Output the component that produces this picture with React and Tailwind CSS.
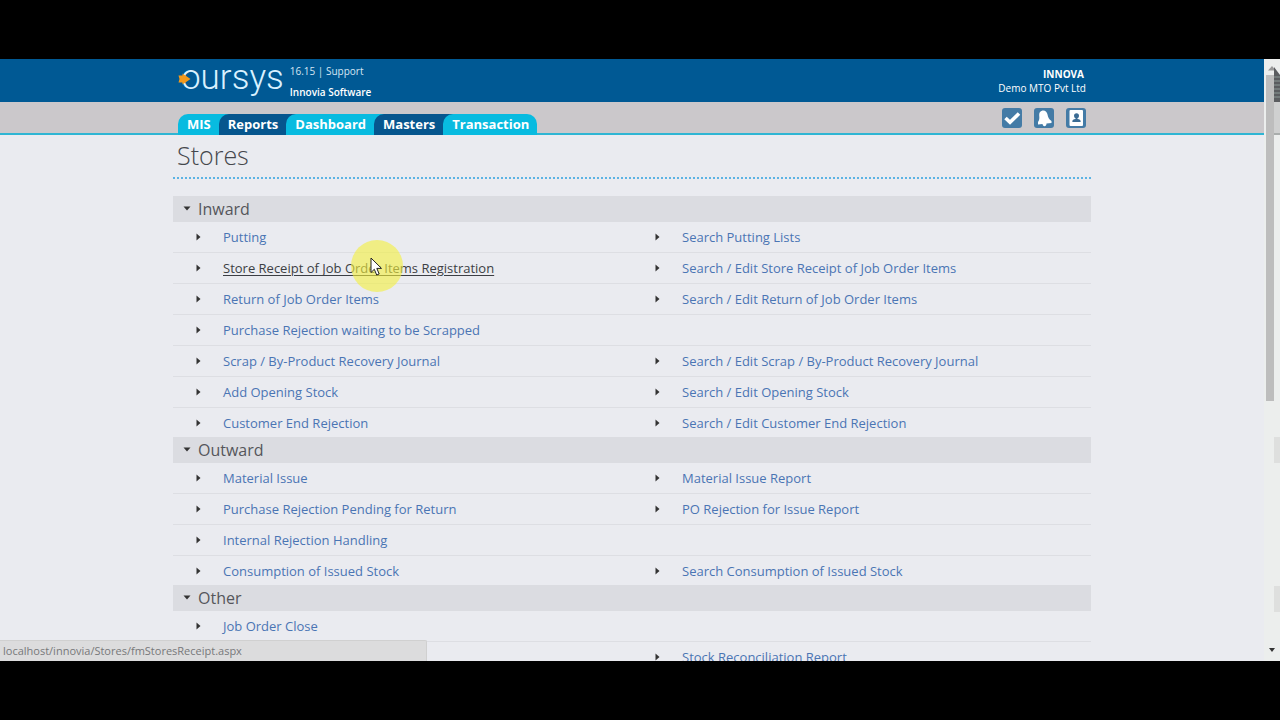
const tabs = [
  { label: "MIS", active: false },
  { label: "Reports", active: true },
  { label: "Dashboard", active: false },
  { label: "Masters", active: true },
  { label: "Transaction", active: false },
];

const sections = [
  {
    title: "Inward",
    rows: [
      ["Putting", "Search Putting Lists"],
      ["Store Receipt of Job Order Items Registration", "Search / Edit Store Receipt of Job Order Items"],
      ["Return of Job Order Items", "Search / Edit Return of Job Order Items"],
      ["Purchase Rejection waiting to be Scrapped", null],
      ["Scrap / By-Product Recovery Journal", "Search / Edit Scrap / By-Product Recovery Journal"],
      ["Add Opening Stock", "Search / Edit Opening Stock"],
      ["Customer End Rejection", "Search / Edit Customer End Rejection"],
    ],
  },
  {
    title: "Outward",
    rows: [
      ["Material Issue", "Material Issue Report"],
      ["Purchase Rejection Pending for Return", "PO Rejection for Issue Report"],
      ["Internal Rejection Handling", null],
      ["Consumption of Issued Stock", "Search Consumption of Issued Stock"],
    ],
  },
  {
    title: "Other",
    rows: [
      ["Job Order Close", null],
      [null, "Stock Reconciliation Report"],
    ],
  },
];

const HOVERED = "Store Receipt of Job Order Items Registration";

function Logo() {
  return (
    <a href="#" aria-label="oursys" className="relative mr-[6px] block pl-[3px] font-['Roboto',sans-serif] text-[35px] leading-[38px] font-light text-[#d9f1ff]">
      oursys
      <svg className="absolute top-[14px] left-0" width="13" height="12" viewBox="0 0 13 12" aria-hidden="true">
        <path d="M0.500 2.500H4.500V0.500L12.500 6 4.500 11.500V9.500H0.500L1.500 6z" fill="#f39a1b" />
      </svg>
    </a>
  );
}

function Pointer() {
  return (
    <div className="pointer-events-none absolute -top-[18px] left-[128px] size-[52px] rounded-full bg-[#f4f03c]/60">
      <svg className="absolute top-[17px] left-[19px]" width="13" height="20" viewBox="0 0 13 20" aria-hidden="true">
        <path d="M1 1v14.500l3.300-3.200 2.400 5.700 2.500-1-2.400-5.600h4.700z" fill="#fff" stroke="#222" strokeWidth="1" />
      </svg>
    </div>
  );
}

function Entry({ label }) {
  if (!label) return <div />;
  const hovered = label === HOVERED;
  return (
    <div className="flex items-center pl-[23px]">
      <svg className="mr-[22px] shrink-0" width="5" height="8" viewBox="0 0 5 8" aria-hidden="true">
        <path d="M0.500 0.500 4.500 4l-4 3.500z" fill="#333" />
      </svg>
      <span className="relative">
        <a href="#" className={hovered ? "text-[#3c3e44] underline underline-offset-2" : "text-[#4a75b4]"}>
          {label}
        </a>
        {hovered && <Pointer />}
      </span>
    </div>
  );
}

function Section({ title, rows }) {
  return (
    <section>
      <h2 className="flex h-[26px] items-center bg-[#dbdce1] pl-[10px] text-[16px] text-[#55565b]">
        <svg className="mr-[7px] mb-[2px]" width="8" height="5" viewBox="0 0 8 5" aria-hidden="true">
          <path d="M0.500 0.500h7L4 4.500z" fill="#333" />
        </svg>
        {title}
      </h2>
      <div className="divide-y divide-[#dddee3]">
        {rows.map((row, i) => (
          <div key={i} className="grid min-h-[31px] grid-cols-2 text-[13px] leading-[20px] last:min-h-[29px]">
            <Entry label={row[0]} />
            <Entry label={row[1]} />
          </div>
        ))}
      </div>
    </section>
  );
}

function IconButton({ label, children }) {
  return (
    <button type="button" aria-label={label} className="size-5 rounded-[3px] bg-[#447ba6]">
      <svg viewBox="0 0 20 20" aria-hidden="true">{children}</svg>
    </button>
  );
}

function ScrollRail() {
  return (
    <div className="relative flex w-4 shrink-0 flex-col bg-[#eceeed]" aria-hidden="true">
      <div className="flex h-4 justify-center pt-[7px]">
        <svg width="8" height="5" viewBox="0 0 8 5"><path d="M0 4.500 4 0l4 4.500z" fill="#999" /></svg>
      </div>
      <div className="ml-[2px] h-[326px] w-2 bg-[#bdbdbd]" />
      <div className="mt-auto flex h-[13px] justify-center">
        <svg width="8" height="5" viewBox="0 0 8 5"><path d="M1 0h6L4 4z" fill="#333" /></svg>
      </div>
      <div className="absolute inset-y-0 right-0 w-[6px] pt-2">
        <svg className="block" width="6" height="35" viewBox="0 0 6 35">
          <path d="M0 0l6 8v27H0z" fill="#5b5d60" />
          <path d="M0 10h6M0 14h6M0 18h6M0 22h6M0 26h6M0 30h6" stroke="#8d9a96" />
        </svg>
        <div className="h-[33px] border-b-2 border-[#a9adac] bg-[#cfd0d0]" />
        <div className="mt-[302px] h-[26px] bg-[#dedfde]" />
        <div className="mt-[123px] h-[26px] bg-[#dedfde]" />
      </div>
    </div>
  );
}

export default function App() {
  return (
    <div className="flex h-screen flex-col bg-black py-[59px] font-['Open_Sans',sans-serif]">
      <div className="relative flex min-h-0 flex-1 overflow-hidden bg-[#eaebf0]">
        <div className="min-w-0 flex-1">
          <header className="h-[43px] bg-[#005994] text-white">
            <div className="mx-auto flex max-w-[918px] justify-between pr-[5px] pl-[5px]">
              <div className="flex">
                <Logo />
                <div className="pt-[4px] text-[10px] leading-[17px] text-[#d5e6f3]">
                  <p>
                    16.15 | <a href="#">Support</a>
                  </p>
                  <p className="pt-[4px] font-semibold text-white">Innovia Software</p>
                </div>
              </div>
              <div className="pt-[8px] text-right text-[10px] leading-[14px]">
                <p className="pr-[2px] font-bold">INNOVA</p>
                <p className="font-medium">Demo MTO Pvt Ltd</p>
              </div>
            </div>
          </header>

          <div className="border-b-2 border-[#2fb5d3] bg-[#cbc8cb]">
            <div className="mx-auto flex h-[31px] max-w-[918px] justify-between pr-[5px] pl-[5px]">
              <nav className="-mb-[2px] flex items-end">
                {tabs.map((tab) => (
                  <a
                    key={tab.label}
                    href="#"
                    className={
                      "relative -mr-[10px] h-[21px] rounded-tl-[10px] pr-[18px] pl-[9px] text-[13px] leading-[21px] font-bold text-white last:mr-0 last:rounded-tr-[10px] last:pr-[8px] " +
                      (tab.active ? "bg-[#06568e]" : "bg-[#08bbe0]")
                    }
                  >
                    {tab.label}
                  </a>
                ))}
              </nav>
              <div className="flex items-center gap-3">
                <IconButton label="Tasks">
                  <path d="M3.500 10 8 14.200 17 5.500" fill="none" stroke="#fff" strokeWidth="3.600" />
                </IconButton>
                <IconButton label="Notifications">
                  <path d="M8.500 2.500c3-.3 4.500 1.500 5 4 .5 3 1.500 5 4 6.500V15l-5 .5c0 3.500-3.500 3.500-4 .5L4 16.500V14C5.500 12 5.500 10 5.200 7.500 5 5 6 3 8.500 2.500z" fill="#fff" />
                </IconButton>
                <IconButton label="Contacts">
                  <rect x="3.500" y="2" width="13.500" height="16" rx="1" fill="#fff" />
                  <circle cx="10.500" cy="7.800" r="2.500" fill="#3b6c94" />
                  <path d="M9.500 9h2v2c2 .2 3.200.7 3.200 3H6.300c0-2.300 1.200-2.800 3.200-3z" fill="#3b6c94" />
                </IconButton>
              </div>
            </div>
          </div>

          <main className="mx-auto max-w-[918px]">
            <h1 className="mb-[17px] h-[44px] border-b-2 border-dotted border-[#5cb3e4] pt-[3px] pl-1 text-[25px] leading-[34px] font-light text-[#45474c]">
              Stores
            </h1>
            {sections.map((section) => (
              <Section key={section.title} {...section} />
            ))}
          </main>
        </div>

        <ScrollRail />

        <div className="absolute bottom-0 left-0 w-1/3 rounded-tr-[2px] border-t border-r border-[#d0d0d0] bg-[#dcdcdd] pl-[3px] text-[11px] leading-[20px] text-[#77787a]">
          localhost/innovia/Stores/fmStoresReceipt.aspx
        </div>
      </div>
    </div>
  );
}
